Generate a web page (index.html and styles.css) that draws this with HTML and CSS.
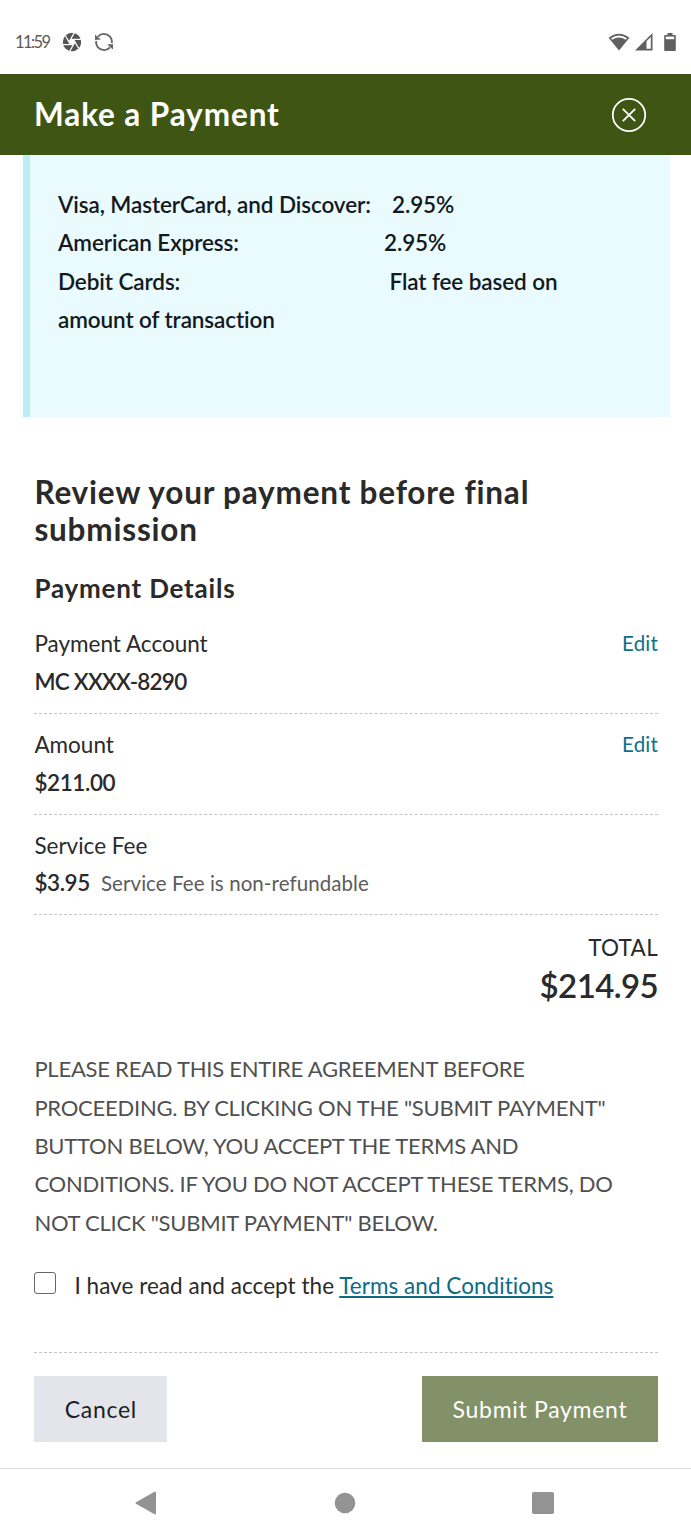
FILE: index.html
```html
<!DOCTYPE html>
<html lang="en">
<head>
    <meta charset="UTF-8">
    <meta name="viewport" content="width=device-width, initial-scale=1.0">
    <title>Make a Payment</title>
    <link rel="stylesheet" href="styles.css">
</head>
<body>
    <div class="status-bar">
        <span class="time">11:59</span>
        <svg class="shutter" width="20" height="20" viewBox="0 0 20 20">
            <circle cx="10" cy="10" r="9.2" fill="#555"/>
            <path d="M13 10l-1.5 2.6h-3L7 10l1.5-2.6h3z" fill="#fff"/>
            <g stroke="#fff" stroke-width="1.2">
                <path d="M8.5 7.4H19"/>
                <path d="M8.5 7.4H19" transform="rotate(60 10 10)"/>
                <path d="M8.5 7.4H19" transform="rotate(120 10 10)"/>
                <path d="M8.5 7.4H19" transform="rotate(180 10 10)"/>
                <path d="M8.5 7.4H19" transform="rotate(240 10 10)"/>
                <path d="M8.5 7.4H19" transform="rotate(300 10 10)"/>
            </g>
        </svg>
        <svg class="sync" width="20" height="20" viewBox="0 0 20 20">
            <path d="M4 4.6A8 8 0 0 1 17.8 8.6V11M16 15.4A8 8 0 0 1 2.2 11.4V9" fill="none" stroke="#666" stroke-width="1.9"/>
            <path d="M1 2.6v5.4l5.8-.6zM19 17.4v-5.4l-5.8.6z" fill="#666"/>
        </svg>
        <div class="signals">
            <svg width="22" height="18" viewBox="0 0 22 18">
                <path d="M.6 4.8Q11-3.4 21.4 4.8L11 17.6z" fill="#606060"/>
                <path d="M3 5.3Q11-.2 19 5.3L17.8 6.8Q11 2.2 4.2 6.8z" fill="#fff"/>
            </svg>
            <svg width="18" height="18" viewBox="0 0 18 18">
                <path d="M0 17.5L17.5 0v17.5z" fill="#606060"/>
                <path d="M11.5 8.2L15.8 4v11.8h-4.3z" fill="#fff"/>
            </svg>
            <svg class="battery" width="12" height="18" viewBox="0 0 12 18">
                <path d="M3.5 0h5v2H11q.8 0 .8.8v14.4q0 .8-.8.8H1q-.8 0-.8-.8V2.8Q.2 2 1 2h2.5z" fill="#606060"/>
                <path d="M1.8 3.6h8.4v2.6H1.8z" fill="#fff"/>
            </svg>
        </div>
    </div>

    <header class="header">
        <h1>Make a Payment</h1>
        <svg width="36" height="36" viewBox="0 0 36 36" fill="none" stroke="#fff" stroke-width="1.8">
            <circle cx="18" cy="18" r="16.2"/>
            <path d="M11.8 11.8L24.2 24.2M24.2 11.8L11.8 24.2"/>
        </svg>
    </header>

    <div class="fees">
        <p><span class="card visa">Visa, MasterCard, and Discover:</span>2.95%</p>
        <p><span class="card amex">American Express:</span>2.95%</p>
        <p><span class="card debit">Debit Cards:</span>Flat fee based on</p>
        <p>amount of transaction</p>
    </div>

    <main class="container">
        <h2>Review your payment before final submission</h2>
        <h3>Payment Details</h3>
        <div class="row">
            <div>
                <div class="label">Payment Account</div>
                <div class="value mc">MC XXXX-8290</div>
            </div>
            <a class="edit">Edit</a>
        </div>
        <div class="row">
            <div>
                <div class="label">Amount</div>
                <div class="value">$211.00</div>
            </div>
            <a class="edit">Edit</a>
        </div>
        <div class="row">
            <div>
                <div class="label">Service Fee</div>
                <div class="value fee">$3.95<span class="note">Service Fee is non-refundable</span></div>
            </div>
        </div>
        <div class="total">
            <div class="total-label">TOTAL</div>
            <div class="total-value">$214.95</div>
        </div>
        <p class="agreement">PLEASE READ THIS ENTIRE AGREEMENT BEFORE<br>PROCEEDING. BY CLICKING ON THE "SUBMIT PAYMENT"<br>BUTTON BELOW, YOU ACCEPT THE TERMS AND<br>CONDITIONS. IF YOU DO NOT ACCEPT THESE TERMS, DO<br>NOT CLICK "SUBMIT PAYMENT" BELOW.</p>
        <div class="accept">
            <input type="checkbox" id="terms">
            <label for="terms">I have read and accept the <a class="terms">Terms and Conditions</a></label>
        </div>
        <div class="buttons">
            <button class="cancel">Cancel</button>
            <button class="submit">Submit Payment</button>
        </div>
    </main>

    <nav class="nav-bar">
        <svg width="22" height="24" viewBox="0 0 22 24"><path d="M1.5 12L20 1.5v21z" fill="#939393" stroke="#939393" stroke-width="2" stroke-linejoin="round"/></svg>
        <svg width="22" height="22" viewBox="0 0 22 22"><circle cx="11" cy="11" r="10.3" fill="#939393"/></svg>
        <svg width="22" height="22" viewBox="0 0 22 22"><rect width="22" height="22" rx="1.8" fill="#939393"/></svg>
    </nav>
</body>
</html>
```

FILE: styles.css
```css
*{
    box-sizing: border-box;
    margin: 0;
    padding: 0;
}
body{
    font-family: Lato, "Open Sans", sans-serif;
    font-size: 22.5px;
    line-height: 38.4px;
    font-variant-ligatures: none;
    color: #2a2a2a;
    background: #fff;
    height: 1536px;
    display: flex;
    flex-direction: column;
}
.status-bar{
    height: 74px;
    padding: 10px 15px 0 15px;
    display: flex;
    align-items: center;
}
.time{
    width: 47px;
    font-size: 16.5px;
    letter-spacing: -1.6px;
    color: #5a5a5a;
}
.sync{
    margin-left: 12px;
}
.signals{
    margin-left: auto;
    display: flex;
    gap: 5px;
}
.battery{
    margin-left: 6px;
}
.header{
    height: 81px;
    padding: 0 44px 0 34px;
    display: flex;
    align-items: center;
    justify-content: space-between;
    background: #3f5513;
    color: #fff;
}
h1{
    padding-bottom: 2px;
    font-size: 31.5px;
    font-weight: 700;
    line-height: 38px;
    letter-spacing: 0.9px;
}
.fees{
    width: 647px;
    height: 262px;
    margin-left: 23px;
    padding: 31px 28px;
    border-left: 7px solid #b9eef5;
    background: #e9fbff;
    color: #14191c;
    font-weight: 600;
    letter-spacing: -0.1px;
}
.card{
    display: inline-block;
}
.visa{
    width: 334px;
}
.amex{
    width: 326px;
}
.debit{
    width: 331.5px;
}
.container{
    padding: 57px 33px 0 34.4px;
    flex: 1;
}
h2{
    font-size: 31.5px;
    font-weight: 700;
    line-height: 36.8px;
    letter-spacing: 0.8px;
}
h3{
    margin: 24px 0 10px;
    font-size: 26px;
    font-weight: 700;
    line-height: 32px;
    letter-spacing: 0.8px;
}
.row{
    display: flex;
    justify-content: space-between;
    padding: 11.5px 0 12.8px;
    line-height: 37.8px;
    border-bottom: 1px dashed #c4c4c4;
}
.value{
    font-weight: 600;
    letter-spacing: -0.4px;
}
.mc{
    letter-spacing: -0.75px;
}
.fee{
    line-height: 36.8px;
}
.edit{
    font-size: 20.5px;
    letter-spacing: 0.2px;
    color: #0b7189;
}
.note{
    margin-left: 11px;
    font-size: 20.5px;
    font-weight: 400;
    letter-spacing: 0.07px;
    color: #5c5c5c;
}
.total{
    padding-top: 14px;
    text-align: right;
    line-height: 38px;
}
.total-label{
    letter-spacing: 0.3px;
}
.total-value{
    font-size: 33px;
    font-weight: 600;
    line-height: 37px;
    letter-spacing: -0.6px;
}
.agreement{
    margin-top: 46px;
    font-size: 22px;
    letter-spacing: -0.24px;
    color: #505050;
}
.accept{
    display: flex;
    margin-top: 25px;
    padding-bottom: 46px;
    border-bottom: 1px dashed #c4c4c4;
}
.accept input{
    appearance: none;
    width: 22px;
    height: 22px;
    margin: 5px 18px 0 0;
    border: 1.5px solid #666;
    border-radius: 3px;
}
.accept label{
    letter-spacing: 0.04px;
}
.terms{
    color: #0b6c84;
    text-decoration: underline;
    text-decoration-thickness: 2px;
    text-underline-offset: 2px;
}
.buttons{
    display: flex;
    justify-content: space-between;
    padding-top: 23px;
}
button{
    height: 66px;
    border: 0;
    font-family: inherit;
    font-size: 23px;
    letter-spacing: 0.7px;
}
.cancel{
    width: 133px;
    background: #e4e5eb;
    color: #1c1f24;
}
.submit{
    width: 236px;
    background: #829167;
    color: #fff;
}
.nav-bar{
    height: 68px;
    padding: 0 137px 0 135px;
    display: flex;
    align-items: center;
    justify-content: space-between;
    border-top: 1px solid #dcdcdc;
}
```
